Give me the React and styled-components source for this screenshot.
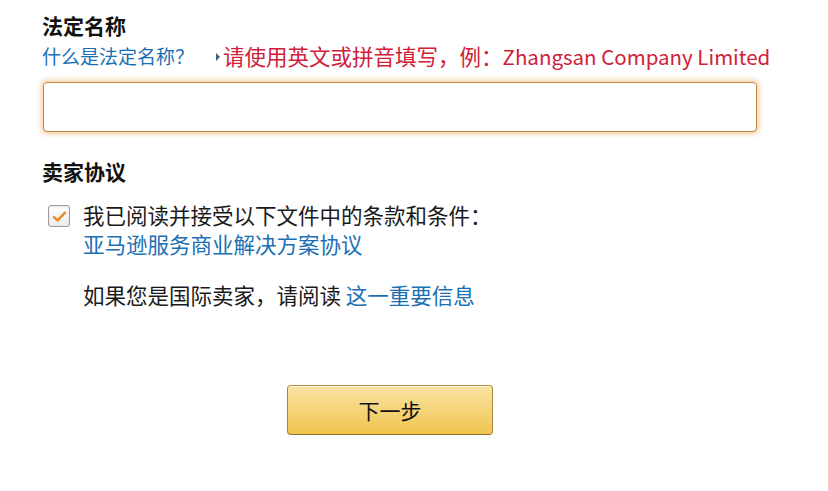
import React from "react";
import styled, { createGlobalStyle } from "styled-components";

const Global = createGlobalStyle`
  html, body { margin: 0; padding: 0; background: #fff; }
  body { font-family: "Noto Sans CJK SC", "Noto Sans", sans-serif; color: #1a1a1a; }
`;

const Page = styled.div`
  width: 828px;
  height: 491px;
  box-sizing: border-box;
  padding: 13px 0 0 42px;
  display: flex;
  flex-direction: column;
  align-items: flex-start;
`;

const SectionTitle = styled.div`
  font-size: 21px;
  line-height: 24px;
  font-weight: 700;
  color: #111;
  margin-top: ${(p) => p.$top || 0}px;
`;

const HintRow = styled.div`
  display: flex;
  align-items: center;
  margin-top: 7px;
  height: 24px;
  white-space: nowrap;
`;

const HelpLink = styled.a`
  font-size: 19px;
  line-height: 24px;
  color: #1a6fb5;
  text-decoration: none;
`;

const Caret = styled.span`
  display: inline-block;
  width: 0;
  height: 0;
  border-top: 4px solid transparent;
  border-bottom: 4px solid transparent;
  border-left: 4px solid #3d5f80;
  margin: 2px 3px 0 22px;
`;

const Note = styled.span`
  font-size: 21.5px;
  line-height: 24px;
  color: #d0203a;
`;

const Latin = styled.span`
  font-size: 20.5px;
`;

const TextInput = styled.input`
  box-sizing: border-box;
  margin: 14px 0 0 1px;
  width: 714px;
  height: 50px;
  border: 1px solid #bf8a45;
  border-radius: 4px;
  box-shadow: 0 0 5px 2px rgba(242, 155, 65, 0.5);
  outline: none;
  padding: 0 10px;
  font-size: 18px;
  font-family: inherit;
  background: #fff;
`;

const AgreeRow = styled.label`
  display: flex;
  align-items: flex-start;
  gap: 13px;
  margin-top: 17px;
  padding-left: 6px;
  cursor: pointer;
`;

const Box = styled.span`
  flex: none;
  box-sizing: border-box;
  width: 22px;
  height: 22px;
  margin-top: 5px;
  border: 1px solid #9c9c9c;
  border-radius: 3px;
  background: linear-gradient(to bottom, #ffffff, #ececec);
  box-shadow: inset 0 1px 2px rgba(0, 0, 0, 0.12);
  display: flex;
  align-items: center;
  justify-content: center;
`;

const AgreeText = styled.div`
  font-size: 21.5px;
  line-height: 29px;
  color: #1a1a1a;
  display: flex;
  flex-direction: column;
`;

const DocLink = styled.a`
  color: #1a6fb5;
  text-decoration: none;
`;

const Intl = styled.p`
  margin: 22px 0 0 41px;
  font-size: 21.5px;
  line-height: 29px;
  color: #1a1a1a;
`;

const NextButton = styled.button`
  box-sizing: border-box;
  margin: 76px 0 0 245px;
  width: 206px;
  height: 50px;
  border: 1px solid;
  border-color: #b0913f #a5863a #8f722e;
  border-radius: 4px;
  background: linear-gradient(to bottom, #f8e3a4, #f0c54e);
  box-shadow: inset 0 1px 0 rgba(255, 255, 255, 0.6);
  font-family: inherit;
  font-size: 21px;
  color: #111;
  cursor: pointer;
`;

function Check() {
  return (
    <svg width="15" height="13" viewBox="0 0 15 13">
      <path
        d="M2 7.2 L5.6 10.4 L13 2.6"
        fill="none"
        stroke="#e58a2e"
        strokeWidth="2.5"
        strokeLinecap="round"
        strokeLinejoin="round"
      />
    </svg>
  );
}

export default function App() {
  return (
    <>
      <Global />
      <Page>
        <SectionTitle>法定名称</SectionTitle>
        <HintRow>
          <HelpLink href="#">什么是法定名称？</HelpLink>
          <Caret />
          <Note>
            请使用英文或拼音填写，例：<Latin>Zhangsan Company Limited</Latin>
          </Note>
        </HintRow>
        <TextInput type="text" />
        <SectionTitle $top={27}>卖家协议</SectionTitle>
        <AgreeRow>
          <Box>
            <Check />
          </Box>
          <AgreeText>
            <span>我已阅读并接受以下文件中的条款和条件：</span>
            <DocLink href="#">亚马逊服务商业解决方案协议</DocLink>
          </AgreeText>
        </AgreeRow>
        <Intl>
          如果您是国际卖家，请阅读 <DocLink href="#">这一重要信息</DocLink>
        </Intl>
        <NextButton>下一步</NextButton>
      </Page>
    </>
  );
}
